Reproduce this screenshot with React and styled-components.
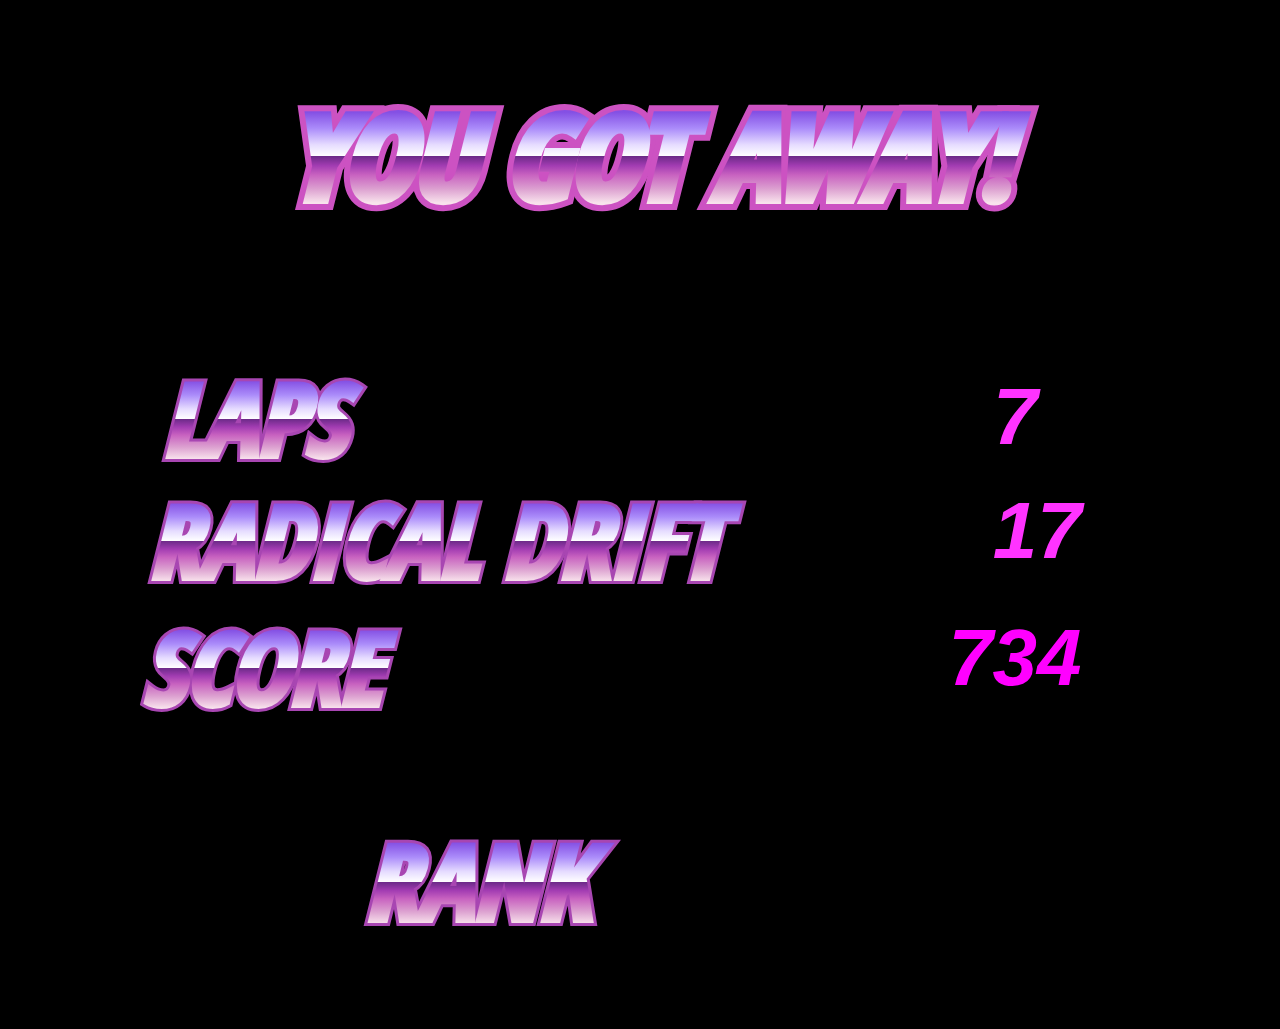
import React from "react";
import styled, { createGlobalStyle } from "styled-components";

const GlobalStyle = createGlobalStyle`
  body {
    margin: 0;
    background-color: #000000;
  }
`;

const Screen = styled.main`
  box-sizing: border-box;
  min-height: 100vh;
  padding: 96px 0 80px;
  background-color: #000000;
`;

const Chrome = styled.span`
  display: inline-block;
  position: relative;
  isolation: isolate;
  font-family: "Open Sans Condensed", "Open Sans", sans-serif;
  font-size: ${(p) => p.$size}px;
  font-style: italic;
  font-weight: 800;
  line-height: 1;
  white-space: nowrap;

  &::before {
    content: attr(data-text);
    position: absolute;
    top: 0;
    left: 0;
    z-index: -1;
    padding: 0 32px;
    color: ${(p) => p.$edge};
    -webkit-text-stroke: ${(p) => p.$outer}px ${(p) => p.$edge};
  }
`;

const Fill = styled.span`
  display: block;
  padding: 0 32px;
  color: transparent;
  -webkit-text-stroke: ${(p) => p.$inner}px transparent;
  background-image: linear-gradient(
    to bottom,
    #8450e4 14%,
    #ab8cfa 28%,
    #e6dcff 42%,
    #ffffff 52%,
    #6c2a88 52%,
    #a23cb2 60%,
    #c862c0 68%,
    #dca0d0 80%,
    #f8e2ec 92%
  );
  -webkit-background-clip: text;
  background-clip: text;
`;

const TitleRow = styled.h1`
  display: flex;
  justify-content: center;
  margin: 0;
  padding-left: 20px;
`;

const Stats = styled.dl`
  margin: 155px 15.5% 0 8.5%;
`;

const Stat = styled.div`
  display: flex;
  justify-content: space-between;
  align-items: flex-start;
  margin-top: ${(p) => p.$space}px;
  padding-left: ${(p) => p.$indent}px;
`;

const Label = styled.dt`
  margin: 0;
`;

const Value = styled.dd`
  margin: 0;
  padding-top: ${(p) => p.$drop}px;
  padding-right: ${(p) => p.$inset}px;
  font-family: "Liberation Sans", Arial, sans-serif;
  font-size: 80px;
  font-style: italic;
  font-weight: 700;
  line-height: 84px;
  color: ${(p) => p.$color};
`;

const Rank = styled.h2`
  margin: 112px 0 0 26%;
  font-size: 0;
`;

function ChromeText({ text, size, outer = 12, inner = 6, edge = "#a846b2" }) {
  return (
    <Chrome data-text={text} $size={size} $outer={outer} $edge={edge}>
      <Fill $inner={inner}>{text}</Fill>
    </Chrome>
  );
}

const stats = [
  { label: "LAPS", value: 7, space: 0, indent: 22, drop: 8, inset: 44, color: "#ff33ff" },
  { label: "RADICAL DRIFT", value: 17, space: 22, indent: 8, drop: 0, inset: 0, color: "#ff33ff" },
  { label: "SCORE", value: 734, space: 27, indent: 2, drop: 0, inset: 0, color: "#ff00ff" },
];

function App() {
  return (
    <>
      <GlobalStyle />
      <Screen>
        <TitleRow>
          <ChromeText
            text="YOU GOT AWAY!"
            size={116}
            outer={22}
            inner={10}
            edge="#cc52c2"
          />
        </TitleRow>

        <Stats>
          {stats.map((stat) => (
            <Stat key={stat.label} $space={stat.space} $indent={stat.indent}>
              <Label>
                <ChromeText text={stat.label} size={100} />
              </Label>
              <Value $drop={stat.drop} $inset={stat.inset} $color={stat.color}>
                {stat.value}
              </Value>
            </Stat>
          ))}
        </Stats>

        <Rank>
          <ChromeText text="RANK" size={104} />
        </Rank>
      </Screen>
    </>
  );
}

export default App;
